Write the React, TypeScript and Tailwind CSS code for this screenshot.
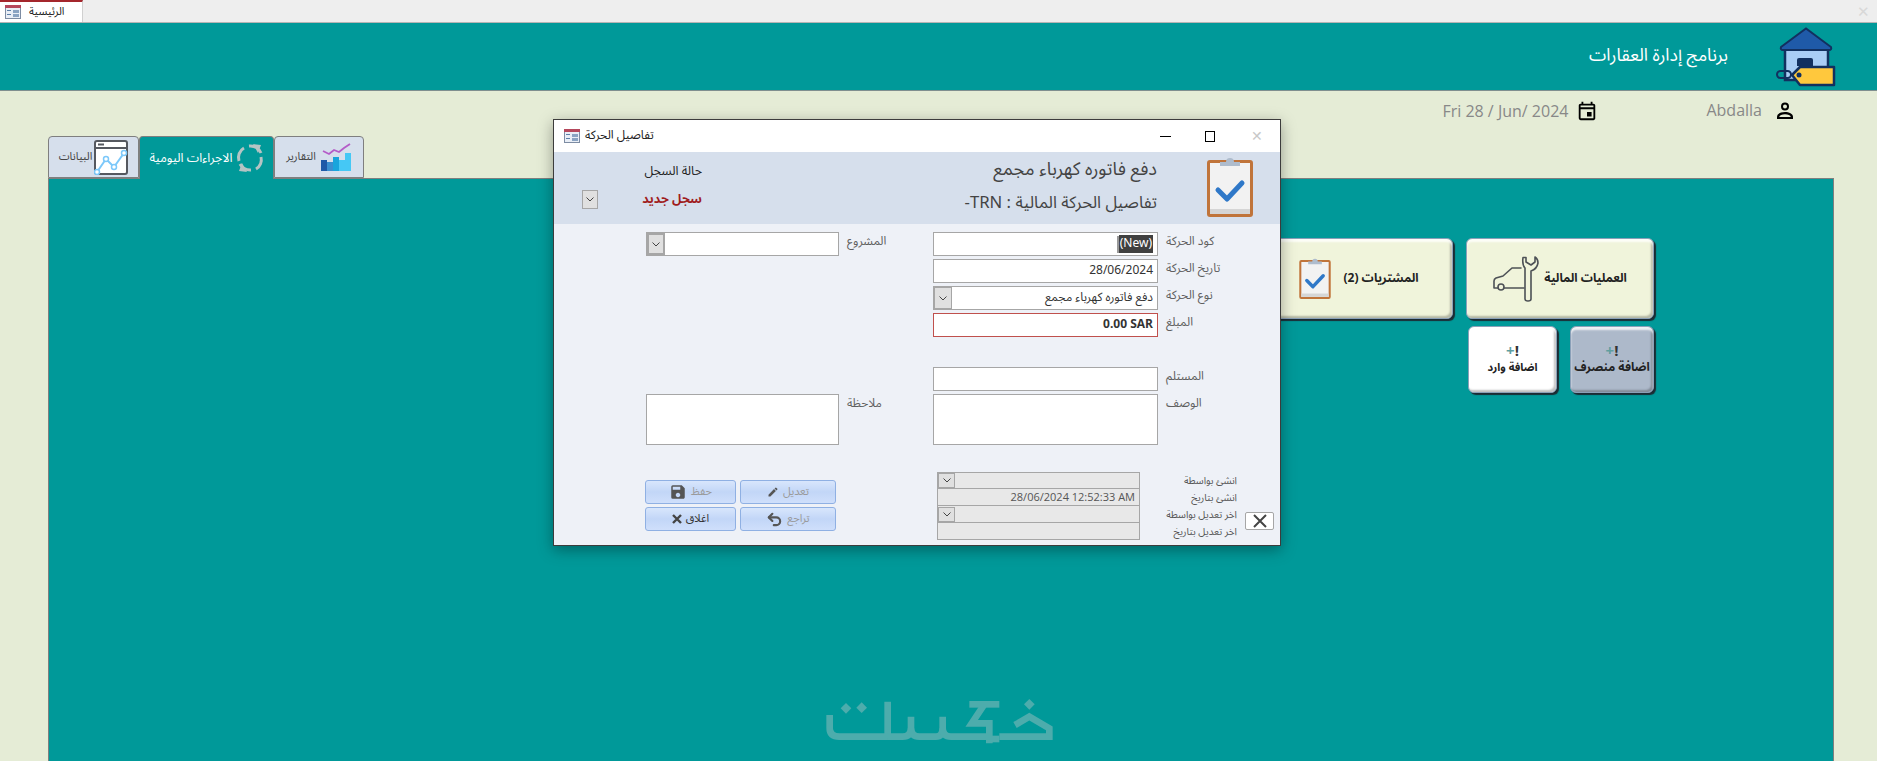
import { MdOutlineEvent, MdSave, MdEdit } from "react-icons/md";
import { Undo2 } from "lucide-react";
import { ReactNode } from "react";

const ar = "font-['Noto_Sans_Arabic','DejaVu_Sans',sans-serif]";

function FormIcon({ className }: { className?: string }) {
  return (
    <svg viewBox="0 0 16 14" className={className}>
      <rect x="0.5" y="0.5" width="15" height="13" fill="#e9eef6" stroke="#7d8ca3" />
      <rect x="0" y="0" width="16" height="3" fill="#b5485c" />
      <rect x="2" y="5" width="4" height="1" fill="#5b7fa8" />
      <rect x="2" y="9" width="4" height="1" fill="#5b7fa8" />
      <rect x="8" y="5" width="6" height="3" fill="#8aa3c2" />
      <rect x="8" y="9" width="6" height="3" fill="#8aa3c2" />
    </svg>
  );
}

function Clipboard({ className }: { className?: string }) {
  return (
    <svg viewBox="0 0 46 60" className={className}>
      <rect x="1.5" y="4.5" width="43" height="54" rx="1.5" fill="#f2f2f2" stroke="#c0743a" strokeWidth="3" />
      <rect x="3" y="52" width="40" height="5" fill="#d5d5d5" />
      <path d="M13 9 V5 H19 A4 4 0 0 1 27 5 H33 V9 Z" fill="#aebccd" />
      <path d="M11 33 L20 42 L35 26" fill="none" stroke="#2f78c8" strokeWidth="5" strokeLinecap="round" strokeLinejoin="round" />
    </svg>
  );
}

function HouseLogo({ className }: { className?: string }) {
  return (
    <svg viewBox="0 0 60 60" className={className}>
      <rect x="9" y="21" width="43" height="32" fill="#a9cdf5" stroke="#12305f" strokeWidth="2.5" />
      <path d="M5 20 L30 1.5 L55 20 Q56 23 53 23 H7 Q4 23 5 20 Z" fill="#1f5aa8" stroke="#12305f" strokeWidth="2" />
      <path d="M21 39 V33 Q21 31 23 31 H35 Q37 31 37 33 V39 Z" fill="#12305f" />
      <rect x="1" y="44" width="14" height="7" rx="3.5" fill="none" stroke="#12305f" strokeWidth="2" />
      <path d="M16 48 L24 40 H58 V58 H24 Z" fill="#ffc83d" stroke="#12305f" strokeWidth="2.5" strokeLinejoin="round" />
      <circle cx="23" cy="48" r="2.5" fill="#12305f" />
    </svg>
  );
}

function UserIcon({ className }: { className?: string }) {
  return (
    <svg viewBox="0 0 18 18" className={className}>
      <circle cx="9" cy="4.5" r="3" fill="none" stroke="#000" strokeWidth="2" />
      <path d="M1 17 V15 C1 11.5 5 10 9 10 C13 10 17 11.5 17 15 V17 Z" fill="#000" />
      <path d="M3.2 15 C3.6 13 6 12.2 9 12.2 C12 12.2 14.4 13 14.8 15 Z" fill="#e5ecd6" />
    </svg>
  );
}

function ChartTabIcon({ className }: { className?: string }) {
  return (
    <svg viewBox="0 0 31 28" className={className}>
      <path d="M2 8 L8 11 L13 7 L18 9 L23 5 L29 1" fill="none" stroke="#b45cc8" strokeWidth="1.8" />
      <rect x="0" y="17" width="6" height="11" fill="#1f5aa8" />
      <rect x="6" y="19" width="6" height="9" fill="#3a8fd0" />
      <rect x="12" y="14" width="6" height="14" fill="#19a5dc" />
      <rect x="18" y="17" width="6" height="11" fill="#45c8f5" />
      <rect x="24" y="10" width="6" height="18" fill="#45c8f5" />
    </svg>
  );
}

function RefreshTabIcon({ className }: { className?: string }) {
  return (
    <svg viewBox="0 0 28 28" className={className} fill="none" stroke="#b5c4c4" strokeWidth="3">
      <path d="M3 17 A11 11 0 0 1 8 4" />
      <path d="M13 2 A12 12 0 0 1 25 9" />
      <path d="M25 13 A11 11 0 0 1 20 25" />
      <path d="M15 26 A12 12 0 0 1 4 20" />
      <path d="M17 0 L25 1 L22 9 Z" fill="#b5c4c4" stroke="none" />
      <path d="M11 28 L3 27 L6 19 Z" fill="#b5c4c4" stroke="none" />
    </svg>
  );
}

function DataTabIcon({ className }: { className?: string }) {
  return (
    <svg viewBox="0 0 34 35" className={className}>
      <rect x="1" y="1" width="32" height="33" rx="2" fill="#fff" stroke="#55585f" strokeWidth="2" />
      <rect x="1" y="7" width="32" height="2" fill="#55585f" />
      <rect x="4" y="3.5" width="6" height="2" fill="#55585f" />
      <path d="M3 32 L12 19 L20 27 L30 13" fill="none" stroke="#7cc8fa" strokeWidth="2" />
      <circle cx="3" cy="32" r="2.5" fill="#fff" stroke="#7cc8fa" strokeWidth="1.5" />
      <circle cx="12" cy="19" r="2.5" fill="#fff" stroke="#7cc8fa" strokeWidth="1.5" />
      <circle cx="20" cy="27" r="2.5" fill="#fff" stroke="#7cc8fa" strokeWidth="1.5" />
      <circle cx="30" cy="13" r="2.5" fill="#fff" stroke="#7cc8fa" strokeWidth="1.5" />
    </svg>
  );
}

function CarWrench({ className }: { className?: string }) {
  return (
    <svg viewBox="0 0 49 46" className={className} fill="none" stroke="#4d5156" strokeWidth="1.6" strokeLinecap="round" strokeLinejoin="round">
      <path d="M28 12 H19 L10 20 L3 22 Q1 23 1 25 V32 H5" />
      <path d="M11 32 H31" />
      <circle cx="8" cy="31" r="3" />
      <path d="M30 1.5 Q29 9 32 12 V43 Q32 45 35 45 Q38 45 38 43 V15 Q44 13 45 7 Q45 3 42 1 V6 L38 9 L33 6 V1.5 Z" />
    </svg>
  );
}

function Watermark() {
  return (
    <svg viewBox="0 0 720 168" className="mt-auto mb-[10px] h-[56px] w-[240px] self-center">
      <g fill="none" stroke="#4dacac" strokeWidth="20">
        <path d="M26 60 V100 Q26 125 55 125 H200 V20" />
        <path d="M200 125 H245 Q270 125 270 100 V65" />
        <path d="M270 100 Q270 125 295 125 H345 Q365 125 365 100 V65" />
        <path d="M365 100 Q365 125 390 125 H495" />
        <path d="M445 28 H535" />
        <path d="M490 28 L452 85 H505 V145" />
        <path d="M505 132 H535" />
        <path d="M535 125 H685 V100 L625 65 L582 90" />
      </g>
      <g fill="#4dacac">
        <path d="M75 24 L91 40 L75 56 L59 40 Z" />
        <path d="M122 22 L138 38 L122 54 L106 38 Z" />
        <path d="M625 12 L641 28 L625 44 L609 28 Z" />
      </g>
    </svg>
  );
}

function Tab({ active, children }: { active?: boolean; children: ReactNode }) {
  return (
    <div
      className={`flex items-center rounded-t-[4px] border border-[#7f7f7f] ${
        active ? "relative z-10 -mb-px h-[43px] border-b-0 bg-[#009999] text-white" : "h-[42px] bg-[#d6dfec] text-[#444]"
      } ${ar}`}
    >
      {children}
    </div>
  );
}

function MainButton({ children, className }: { children: ReactNode; className: string }) {
  return (
    <div
      className={`flex items-center rounded-[6px] border border-[#8aa0b8] shadow-[inset_0_3px_2px_rgba(255,255,255,0.8),inset_-2px_-2px_2px_rgba(0,0,0,0.25),2px_2px_1px_#1c2b33] ${ar} ${className}`}
    >
      {children}
    </div>
  );
}

function PlusMark() {
  return (
    <span className="flex h-[16px] items-center font-['Open_Sans',sans-serif] text-[15px] font-bold leading-[16px]">
      <span className="text-[#5f9ea0]">+</span>
      <span className="text-[#333]">!</span>
    </span>
  );
}

function Box({ children, className = "" }: { children?: ReactNode; className?: string }) {
  return (
    <div
      dir="rtl"
      className={`flex h-[24px] items-center border border-[#a6a6a6] bg-white pr-[4px] text-[12px] text-[#333] ${ar} ${className}`}
    >
      {children}
    </div>
  );
}

function ComboArrow({ className = "" }: { className?: string }) {
  return (
    <div className={`flex items-center justify-center border border-[#a6a6a6] bg-[#e0e0e0] ${className}`}>
      <svg viewBox="0 0 8 5" className="h-[5px] w-[8px]" fill="none" stroke="#444">
        <path d="M0.5 0.5 L4 4 L7.5 0.5" />
      </svg>
    </div>
  );
}

function Label({ children, className = "" }: { children: ReactNode; className?: string }) {
  return (
    <div dir="rtl" className={`text-[12px] leading-[20px] text-[#5f5f5f] ${ar} ${className}`}>
      {children}
    </div>
  );
}

function FormButton({ children, dim }: { children: ReactNode; dim?: boolean }) {
  return (
    <div
      className={`flex h-[24px] items-center justify-center gap-[4px] rounded-[3px] border border-[#8fb0e3] bg-gradient-to-b from-[#d8e6fc] via-[#c2d6f7] to-[#cfdffb] text-[11px] ${
        dim ? "text-[#9a9a9a]" : "text-[#333]"
      } ${ar}`}
    >
      {children}
    </div>
  );
}

export default function App() {
  return (
    <div className="relative flex h-screen w-full flex-col overflow-hidden bg-[#e5ecd6] font-['Open_Sans',sans-serif]">
      <div className="flex h-[23px] items-stretch justify-between border-b border-[#b5b5b5] bg-[#eeeeee]">
        <div className="flex w-[83px] items-center gap-[8px] border-t-2 border-r border-t-[#a4262c] border-r-[#d0d0d0] bg-white pl-[5px]">
          <FormIcon className="h-[14px] w-[16px]" />
          <span className={`text-[11px] text-[#222] ${ar}`}>الرئيسية</span>
        </div>
        <div className="flex items-center pr-[7px] text-[15px] leading-none text-[#d8d8d8]">✕</div>
      </div>

      <div className="flex h-[68px] items-center justify-end gap-[48px] border-b border-[#7f8f8f] bg-[#009999] pr-[41px]">
        <span dir="rtl" className={`text-[17.5px] text-white ${ar}`}>برنامج إدارة العقارات</span>
        <HouseLogo className="h-[60px] w-[60px]" />
      </div>

      <div className="flex h-[45px] items-start justify-end pt-[8px] pr-[83px] text-[16px] text-[#888]">
        <span className="leading-[24px]">Fri 28 / Jun/ 2024</span>
        <MdOutlineEvent className="mt-px ml-[8px] h-[22px] w-[22px] text-black" />
        <span className="ml-[108px] leading-[22px]">Abdalla</span>
        <UserIcon className="mt-[3px] ml-[14px] h-[18px] w-[18px]" />
      </div>

      <div className="flex items-start pl-[48px]">
        <Tab>
          <div className="flex w-[89px] items-center justify-center gap-[2px] text-[11px]">
            <span dir="rtl">البيانات</span>
            <DataTabIcon className="h-[35px] w-[34px]" />
          </div>
        </Tab>
        <Tab active>
          <div className="flex w-[133px] items-center justify-center gap-[3px] text-[12.5px]">
            <span dir="rtl">الاجراءات اليومية</span>
            <RefreshTabIcon className="h-[28px] w-[28px]" />
          </div>
        </Tab>
        <Tab>
          <div className="flex w-[88px] items-center justify-center gap-[5px] text-[11px]">
            <span dir="rtl">التقارير</span>
            <ChartTabIcon className="h-[28px] w-[31px]" />
          </div>
        </Tab>
      </div>

      <div className="ml-[48px] flex w-[1786px] flex-1 flex-col border border-b-0 border-[#7f7f7f] bg-[#009999] pt-[59px]">
        <div className="flex flex-col items-end pr-[179px]">
          <div className="flex gap-[13px]">
            <MainButton className="h-[81px] w-[188px] justify-center gap-[12px] bg-[#f0f4db] text-[12px] font-bold text-[#222]">
              <Clipboard className="h-[41px] w-[32px]" />
              <span dir="rtl">المشتريات (2)</span>
            </MainButton>
            <MainButton className="h-[81px] w-[188px] justify-center gap-[2px] bg-[#f0f4db] text-[12px] font-bold text-[#222]">
              <CarWrench className="h-[46px] w-[49px]" />
              <span dir="rtl">العمليات المالية</span>
            </MainButton>
          </div>
          <div className="mt-[7px] flex gap-[13px]">
            <MainButton className="h-[67px] w-[89px] flex-col justify-center gap-[1px] bg-white text-[11px] font-bold text-[#222]">
              <PlusMark />
              <span dir="rtl" className="leading-[18px]">اضافة وارد</span>
            </MainButton>
            <MainButton className="h-[67px] w-[84px] flex-col justify-center gap-[1px] bg-[#adb9ca] text-[12px] font-bold text-[#222]">
              <PlusMark />
              <span dir="rtl" className="leading-[18px] whitespace-nowrap">اضافة منصرف</span>
            </MainButton>
          </div>
        </div>
        <Watermark />
      </div>

      {/* dialog window floating over the panel */}
      <div className="absolute top-[119px] left-[553px] z-20 flex h-[427px] w-[728px] flex-col border border-[#3c3c3c] bg-[#eef1f7] shadow-[0_4px_14px_rgba(0,0,0,0.35)]">
        <div className="flex h-[32px] items-center bg-white pl-[10px]">
          <FormIcon className="h-[14px] w-[16px]" />
          <span dir="rtl" className={`ml-[5px] text-[12px] text-[#222] ${ar}`}>تفاصيل الحركة</span>
          <div className="ml-auto flex items-center">
            <div className="h-px w-[11px] bg-black" />
            <div className="ml-[34px] h-[11px] w-[10px] border border-black" />
            <div className="mr-[17px] ml-[36px] text-[14px] leading-none text-[#c8c8c8]">✕</div>
          </div>
        </div>

        <div className="flex h-[72px] items-start bg-[#d6dfec]">
          <ComboArrow className="mt-[38px] ml-[28px] h-[19px] w-[16px]" />
          <div dir="rtl" className={`mt-[10px] ml-[42px] flex w-[62px] flex-col gap-[9px] text-right text-[12.5px] ${ar}`}>
            <span className="whitespace-nowrap text-[#222]">حالة السجل</span>
            <span className="whitespace-nowrap font-bold text-[#a01c1c]">سجل جديد</span>
          </div>
          <div dir="rtl" className={`mt-[4px] ml-auto flex flex-col gap-[8px] leading-[26px] text-[#444] ${ar}`}>
            <span className="text-[18.2px]">دفع فاتوره كهرباء مجمع</span>
            <span className="text-[16.7px]">تفاصيل الحركة المالية : TRN-</span>
          </div>
          <Clipboard className="mt-[5px] mr-[27px] ml-[50px] h-[60px] w-[46px]" />
        </div>

        <div className="flex pt-[8px] pl-[92px]">
          <div className="flex w-[287px] flex-col gap-[138px]">
            <div className="flex items-start">
              <Box className="w-[193px]">
                <ComboArrow className="mr-auto h-[22px] w-[18px] !border-2" />
              </Box>
              <Label className="ml-[8px]">المشروع</Label>
            </div>
            <div className="flex items-start">
              <Box className="!h-[51px] w-[193px]" />
              <Label className="ml-[8px]">ملاحظة</Label>
            </div>
          </div>
          <div className="flex flex-col gap-[3px]">
            <div className="flex items-start gap-[8px]">
              <Box className="w-[225px]">
                <span dir="ltr" className="flex items-center">
                  <span className="h-[17px] w-[2px] bg-[#999]" />
                  <span className="bg-[#404040] px-px text-white">(New)</span>
                </span>
              </Box>
              <Label>كود الحركة</Label>
            </div>
            <div className="flex items-start gap-[8px]">
              <Box className="w-[225px]">28/06/2024</Box>
              <Label>تاريخ الحركة</Label>
            </div>
            <div className="flex items-start gap-[8px]">
              <Box className="w-[225px]">
                <span>دفع فاتوره كهرباء مجمع</span>
                <ComboArrow className="mr-auto h-[22px] w-[18px]" />
              </Box>
              <Label>نوع الحركة</Label>
            </div>
            <div className="flex items-start gap-[8px]">
              <Box className="w-[225px] !border-[#c0504d] font-bold">
                <span dir="ltr">0.00 SAR</span>
              </Box>
              <Label>المبلغ</Label>
            </div>
            <div className="mt-[27px] flex items-start gap-[8px]">
              <Box className="w-[225px]" />
              <Label>المستلم</Label>
            </div>
            <div className="flex items-start gap-[8px]">
              <Box className="!h-[51px] w-[225px]" />
              <Label>الوصف</Label>
            </div>
          </div>
        </div>

        <div className="mt-[27px] flex pl-[91px]">
          <div className="mt-[8px] grid h-[51px] w-[191px] grid-cols-[91px_96px] gap-x-[4px] gap-y-[3px]">
            <FormButton dim>
              <MdSave className="h-[18px] w-[18px] text-[#555]" />
              <span dir="rtl">حفظ</span>
            </FormButton>
            <FormButton dim>
              <MdEdit className="h-[12px] w-[12px] text-[#555]" />
              <span dir="rtl">تعديل</span>
            </FormButton>
            <FormButton>
              <svg viewBox="0 0 10 10" className="h-[10px] w-[10px]" fill="none" stroke="#444" strokeWidth="2.4">
                <path d="M1 1 L9 9 M9 1 L1 9" />
              </svg>
              <span dir="rtl">اغلاق</span>
            </FormButton>
            <FormButton dim>
              <Undo2 className="h-[17px] w-[17px] text-[#555]" strokeWidth={3} />
              <span dir="rtl">تراجع</span>
            </FormButton>
          </div>
          <div className="ml-[101px] flex w-[203px] flex-col">
            <div className="flex h-[17px] items-center border border-[#a6a6a6] bg-[#e8e8e8]">
              <ComboArrow className="h-[15px] w-[17px]" />
            </div>
            <div className="-mt-px flex h-[18px] items-center justify-end border border-[#a6a6a6] bg-[#e8e8e8] pr-[4px] text-[11px] text-[#555]">
              28/06/2024 12:52:33 AM
            </div>
            <div className="-mt-px flex h-[18px] items-center border border-[#a6a6a6] bg-[#e8e8e8]">
              <ComboArrow className="h-[15px] w-[17px]" />
            </div>
            <div className="-mt-px h-[18px] border border-[#a6a6a6] bg-[#e8e8e8]" />
          </div>
          <div dir="rtl" className={`flex w-[97px] flex-col text-[10px] leading-[17px] text-[#555] ${ar}`}>
            <span>انشئ بواسطة</span>
            <span>انشئ بتاريخ</span>
            <span>اخر تعديل بواسطة</span>
            <span>اخر تعديل بتاريخ</span>
          </div>
          <div className="mt-[40px] ml-[8px] flex h-[18px] w-[29px] items-center justify-center rounded-[2px] border border-[#a6a6a6] bg-white">
            <svg viewBox="0 0 16 14" className="h-[14px] w-[16px]" fill="none" stroke="#444" strokeWidth="2">
              <path d="M2 1 L14 13 M14 1 L2 13" />
            </svg>
          </div>
        </div>
      </div>
    </div>
  );
}
